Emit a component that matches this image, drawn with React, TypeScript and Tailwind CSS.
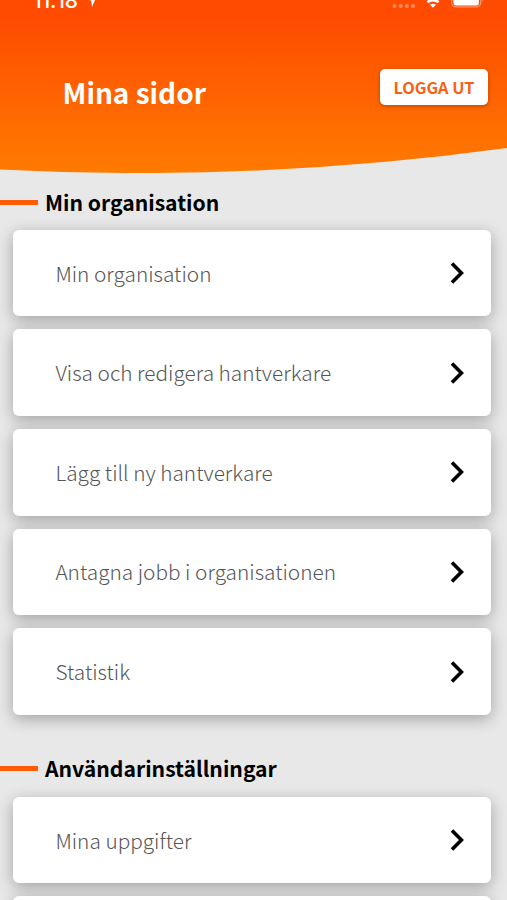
import React from 'react';

const organisationLinks = [
  'Min organisation',
  'Visa och redigera hantverkare',
  'Lägg till ny hantverkare',
  'Antagna jobb i organisationen',
  'Statistik',
];

const userLinks = ['Mina uppgifter', ''];

const StatusBar: React.FC = () => (
  <div className="relative h-[10px] flex justify-between pl-[33px] pr-[23px]">
    <div className="flex items-end">
      <span className="font-['Inter',sans-serif] text-[21px] font-medium leading-[16px] h-[17px] tracking-[-0.2px] text-white">
        11:18
      </span>
      <svg className="ml-[8px] mb-[3px]" width="12" height="14" viewBox="0 0 12 14" fill="white">
        <path d="M12 0 L6 14 L5.2 7.4 L0 6.4 Z" />
      </svg>
    </div>
    <svg className="shrink-0" width="94" height="10" viewBox="0 0 94 10" fill="white">
      <g opacity="0.35">
        <circle cx="4.5" cy="6" r="2" />
        <circle cx="10.7" cy="6" r="2" />
        <circle cx="16.9" cy="6" r="2" />
        <circle cx="23.1" cy="6" r="2" />
      </g>
      <path d="M40 4.7 Q43 2.6 46 4.7 L43 7.8 Z" />
      <path d="M37.4 2.2 Q43 -2 48.6 2.2" fill="none" stroke="white" strokeWidth="2.6" />
      <rect x="61.7" y="-8" width="29" height="14.8" rx="4" fill="none" stroke="white" strokeOpacity="0.4" strokeWidth="1.2" />
      <rect x="63.5" y="-6" width="25.4" height="11.6" rx="2.5" />
      <path d="M92.5 -3 Q94 -1 92.5 2.5 Z" opacity="0.4" />
    </svg>
  </div>
);

const SectionTitle: React.FC<{ title: string }> = ({ title }) => (
  <div className="flex items-center gap-[7px] h-7">
    <span className="w-[38px] h-[5px] bg-[#ff5c05]" />
    <h2 className="-mt-px text-[21.15px] leading-7 font-bold text-black whitespace-nowrap">{title}</h2>
  </div>
);

const LinkCard: React.FC<{ label: string }> = ({ label }) => (
  <button className="w-full h-[86.6px] shrink-0 flex items-center justify-between pl-[42px] pr-[26px] bg-white rounded-md shadow-[0_4px_16px_rgba(0,0,0,0.3)]">
    <span className="-mt-px text-[20.8px] leading-8 font-light text-[#555555] whitespace-nowrap">{label}</span>
    <svg width="15" height="22" viewBox="0 0 15 22" fill="none" stroke="black" strokeWidth="3.6">
      <path d="M2 1.6 L11.4 11 L2 20.4" />
    </svg>
  </button>
);

const App: React.FC = () => {
  return (
    <div className="w-full h-[900px] overflow-hidden bg-[#e8e8e8] font-['Noto_Sans_CJK_JP',sans-serif]">
      {/* Header */}
      <header className="relative h-[173px]">
        <svg className="absolute inset-0 w-full h-full" viewBox="0 0 507 173" preserveAspectRatio="none">
          <defs>
            <linearGradient id="headerFill" x1="0" y1="0" x2="0" y2="1">
              <stop offset="0.1" stopColor="#ff4b00" />
              <stop offset="1" stopColor="#ff7b00" />
            </linearGradient>
          </defs>
          <path d="M0 0 H507 V148 Q253.5 182.6 0 169.4 Z" fill="url(#headerFill)" />
        </svg>
        <StatusBar />
        <div className="relative flex items-start justify-between pt-[59px] pl-[62.5px] pr-[19px]">
          <h1 className="mt-[5px] text-[28px] leading-9 font-bold text-white whitespace-nowrap">Mina sidor</h1>
          <button className="w-[108px] h-9 rounded-[5px] bg-white text-[16.3px] leading-9 font-bold text-[#fb5f12] whitespace-nowrap shadow-[0_1px_4px_rgba(0,0,0,0.3)]">
            LOGGA UT
          </button>
        </div>
      </header>

      {/* Organisation */}
      <section className="pt-[15px]">
        <SectionTitle title="Min organisation" />
        <div className="flex flex-col gap-[13px] mt-[13.9px] pl-[13.4px] pr-4">
          {organisationLinks.map((label) => (
            <LinkCard key={label} label={label} />
          ))}
        </div>
      </section>

      {/* User settings */}
      <section className="pt-[40px]">
        <SectionTitle title="Användarinställningar" />
        <div className="flex flex-col gap-[13px] mt-[13.9px] pl-[13.4px] pr-4">
          {userLinks.map((label) => (
            <LinkCard key={label} label={label} />
          ))}
        </div>
      </section>
    </div>
  );
};

export default App;
